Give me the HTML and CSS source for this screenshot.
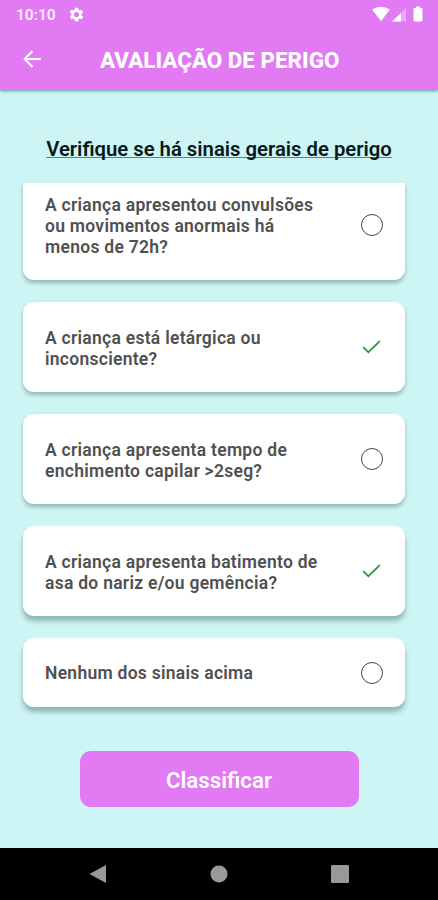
FILE: index.html
```html
<!DOCTYPE html>
<html lang="pt-BR">
<head>
    <meta charset="UTF-8">
    <meta name="viewport" content="width=device-width, initial-scale=1.0">
    <title>Avaliação de Perigo</title>
    <link rel="stylesheet" href="styles.css">
</head>
<body>
<div class="screen">
    <header class="top">
        <div class="status-bar">
            <span class="time">10:10</span>
            <svg class="gear" viewBox="0 0 24 24" width="17" height="17">
                <path fill="#fff" d="M19.14 12.94c.04-.3.06-.61.06-.94 0-.32-.02-.64-.07-.94l2.03-1.58a.49.49 0 0 0 .12-.61l-1.92-3.32a.49.49 0 0 0-.59-.22l-2.39.96c-.5-.38-1.03-.7-1.62-.94l-.36-2.54a.48.48 0 0 0-.48-.41h-3.84a.47.47 0 0 0-.47.41l-.36 2.54c-.59.24-1.13.57-1.62.94l-2.39-.96a.48.48 0 0 0-.59.22L2.74 8.87a.47.47 0 0 0 .12.61l2.03 1.58c-.05.3-.09.63-.09.94s.02.64.07.94l-2.03 1.58a.49.49 0 0 0-.12.61l1.92 3.32c.12.22.37.29.59.22l2.39-.96c.5.38 1.03.7 1.62.94l.36 2.54c.05.24.24.41.48.41h3.84c.24 0 .44-.17.47-.41l.36-2.54c.59-.24 1.13-.56 1.62-.94l2.39.96c.22.08.47 0 .59-.22l1.92-3.32a.47.47 0 0 0-.12-.61zM12 15.6A3.6 3.6 0 1 1 12 8.4a3.6 3.6 0 0 1 0 7.2z"/>
            </svg>
            <svg class="signals" viewBox="0 0 52 18" width="52" height="18">
                <path fill="#fff" d="M0 4.5Q9 -1 18 4.5L9 16z"/>
                <path fill="#fff" opacity="0.35" d="M34 3V16.5H20z"/>
                <path fill="#fff" d="M29 8V16.5H20z"/>
                <path fill="#fff" d="M44 1.6h4v1.4h1.3q1.2 0 1.2 1.2v11q0 1.2-1.2 1.2h-6.6q-1.2 0-1.2-1.2v-11q0-1.2 1.2-1.2H44z"/>
            </svg>
        </div>
        <div class="app-bar">
            <a href="#" class="back" aria-label="Voltar">
                <svg viewBox="0 0 18 18" width="18" height="18">
                    <path fill="none" stroke="#fff" stroke-width="2" d="M17.8 9H1.6M9.6 1L1.6 9l8 8"/>
                </svg>
            </a>
            <h1>AVALIAÇÃO DE PERIGO</h1>
        </div>
    </header>

    <main class="content">
        <h2>Verifique se há sinais gerais de perigo</h2>

        <div class="list">
            <div class="card first">
                <p>A criança apresentou convulsões<br>ou movimentos anormais há<br>menos de 72h?</p>
                <span class="circle"></span>
            </div>
            <div class="card">
                <p>A criança está letárgica ou<br>inconsciente?</p>
                <svg class="check" viewBox="0 0 22 22" width="22" height="22">
                    <path fill="none" stroke="#2f9a3a" stroke-width="1.8" d="M2.2 11.2l5.2 5L18.8 5.2"/>
                </svg>
            </div>
            <div class="card">
                <p>A criança apresenta tempo de<br>enchimento capilar &gt;2seg?</p>
                <span class="circle"></span>
            </div>
            <div class="card deep">
                <p>A criança apresenta batimento de<br>asa do nariz e/ou gemência?</p>
                <svg class="check" viewBox="0 0 22 22" width="22" height="22">
                    <path fill="none" stroke="#2f9a3a" stroke-width="1.8" d="M2.2 11.2l5.2 5L18.8 5.2"/>
                </svg>
            </div>
            <div class="card deep last">
                <p>Nenhum dos sinais acima</p>
                <span class="circle"></span>
            </div>
        </div>

        <button type="button">Classificar</button>
    </main>

    <nav class="nav-bar">
        <svg viewBox="0 0 18 20" width="18" height="20">
            <path fill="#999" d="M17 1v18L1.3 10.6q-.8-.6 0-1.2z"/>
        </svg>
        <svg viewBox="0 0 18 18" width="18" height="18">
            <circle fill="#999" cx="9" cy="9" r="8.5"/>
        </svg>
        <svg viewBox="0 0 18 18" width="18" height="18">
            <rect fill="#999" width="18" height="18" rx="1.2"/>
        </svg>
    </nav>
</div>
</body>
</html>
```
FILE: styles.css
```css
* {
    box-sizing: border-box;
    margin: 0;
    padding: 0;
}

body {
    font-family: Roboto, "Liberation Sans", sans-serif;
    background: #000;
}

.screen {
    display: flex;
    flex-direction: column;
    width: 438px;
    height: 900px;
    overflow: hidden;
}

.top {
    height: 90px;
    background: #e27af4;
    color: #fff;
    box-shadow: 0 1px 3px rgba(0, 60, 60, 0.5);
    z-index: 1;
}

.status-bar {
    display: flex;
    align-items: center;
    height: 28px;
    padding: 0 14px 0 16px;
}

.time {
    padding-top: 1px;
    font-size: 15.5px;
    font-weight: 600;
    opacity: 0.85;
}

.gear {
    margin-left: 12px;
}

.signals {
    margin-left: auto;
}

.app-bar {
    display: flex;
    align-items: center;
    height: 62px;
    padding-left: 23px;
}

.back {
    display: flex;
    margin-right: 59px;
}

h1 {
    padding-top: 2px;
    font-size: 22.4px;
    font-weight: 800;
    line-height: 30px;
}

.content {
    display: flex;
    flex-direction: column;
    align-items: center;
    height: 758px;
    background: #cdf5f5;
}

h2 {
    margin-top: 46px;
    font-size: 20.3px;
    font-weight: 600;
    line-height: 26px;
    color: #08181a;
    text-decoration: underline;
    text-decoration-color: #5f7f80;
    text-decoration-thickness: 1px;
    text-decoration-skip-ink: none;
}

.list {
    display: flex;
    flex-direction: column;
    gap: 22px;
    width: 438px;
    margin-top: 21px;
    padding: 0 33px 22px 23px;
    overflow: hidden;
}

.card {
    display: flex;
    align-items: center;
    justify-content: space-between;
    padding: 22px;
    background: #fff;
    border-radius: 11px;
    box-shadow: 0 3px 4px rgba(0, 50, 50, 0.3);
}

.card.first {
    padding-top: 8px;
    border-radius: 0 0 11px 11px;
}

.card.deep {
    box-shadow: 0 5px 5px rgba(0, 50, 50, 0.32);
}

.card p {
    padding-top: 4px;
    font-size: 17.5px;
    font-weight: 600;
    letter-spacing: 0.27px;
    line-height: 21px;
    color: #505050;
}

.card.last {
    height: 69px;
}

.card.last p {
    padding-top: 2px;
}

.circle {
    width: 22px;
    height: 22px;
    border: 1.5px solid #444;
    border-radius: 50%;
}

button {
    width: 279px;
    height: 56px;
    margin-top: 22px;
    padding-top: 2px;
    background: #e27af4;
    border: none;
    border-radius: 11px;
    color: #fff;
    font-family: inherit;
    font-size: 22.3px;
    font-weight: 600;
}

.nav-bar {
    display: flex;
    align-items: center;
    justify-content: space-between;
    height: 52px;
    padding: 0 89px;
    background: #000;
}
```
